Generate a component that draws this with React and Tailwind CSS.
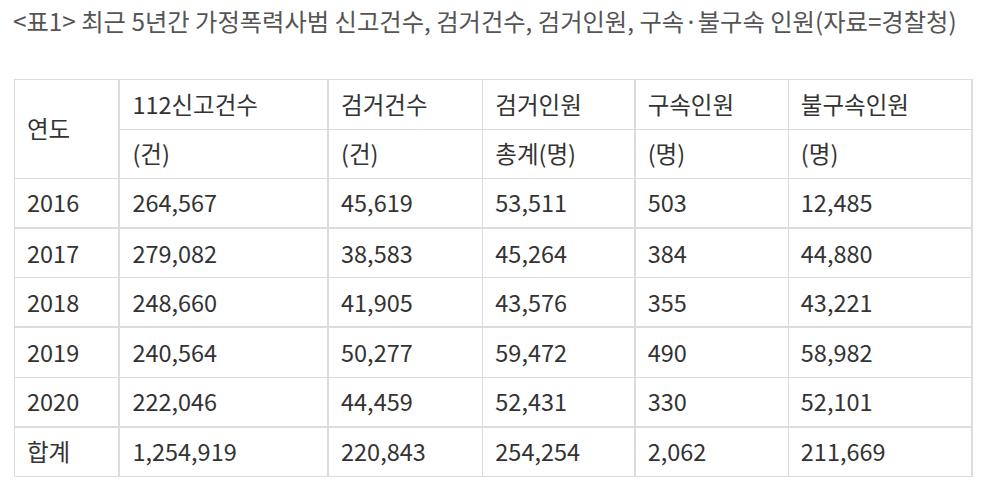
import React from "react";

const rows = [
  ["2016", "264,567", "45,619", "53,511", "503", "12,485"],
  ["2017", "279,082", "38,583", "45,264", "384", "44,880"],
  ["2018", "248,660", "41,905", "43,576", "355", "43,221"],
  ["2019", "240,564", "50,277", "59,472", "490", "58,982"],
  ["2020", "222,046", "44,459", "52,431", "330", "52,101"],
  ["합계", "1,254,919", "220,843", "254,254", "2,062", "211,669"],
];

// columns whose right edge is drawn a bit heavier
const colBorder = [
  "border-r-2",
  "border-r-2",
  "border-r",
  "border-r-2",
  "border-r",
  "border-r-2",
];

const cell = "border-[#dcdcdf] px-[12px] align-middle text-left font-normal";

const App = () => {
  return (
    <div
      className="w-[983px] h-[490px] bg-white text-[#333] overflow-hidden"
      style={{ fontFamily: '"Noto Sans CJK KR", "Noto Sans", sans-serif' }}
    >
      <div className="pl-[13px] pt-[6px] text-[24.3px] leading-[30px] text-[#555] whitespace-nowrap">
        &lt;표1&gt; 최근 5년간 가정폭력사범 신고건수, 검거건수, 검거인원, 구속·불구속 인원(자료=경찰청)
      </div>

      <table className="ml-[14px] mt-[43px] w-[959px] border-collapse text-[23.5px] leading-none border-l border-t border-[#dcdcdf]">
        <colgroup>
          <col className="w-[105px]" />
          <col className="w-[209px]" />
          <col className="w-[155px]" />
          <col className="w-[152px]" />
          <col className="w-[154px]" />
          <col className="w-[184px]" />
        </colgroup>
        <thead>
          <tr className="h-[49.6px]">
            <th rowSpan={2} className={`${cell} ${colBorder[0]} border-b`}>
              연도
            </th>
            <th className={`${cell} ${colBorder[1]} border-b`}>112신고건수</th>
            <th className={`${cell} ${colBorder[2]} border-b`}>검거건수</th>
            <th className={`${cell} ${colBorder[3]} border-b`}>검거인원</th>
            <th className={`${cell} ${colBorder[4]} border-b`}>구속인원</th>
            <th className={`${cell} ${colBorder[5]} border-b`}>불구속인원</th>
          </tr>
          <tr className="h-[49.6px]">
            <th className={`${cell} ${colBorder[1]} border-b`}>(건)</th>
            <th className={`${cell} ${colBorder[2]} border-b`}>(건)</th>
            <th className={`${cell} ${colBorder[3]} border-b`}>총계(명)</th>
            <th className={`${cell} ${colBorder[4]} border-b`}>(명)</th>
            <th className={`${cell} ${colBorder[5]} border-b`}>(명)</th>
          </tr>
        </thead>
        <tbody>
          {rows.map((r, i) => (
            <tr key={r[0]} className="h-[49.6px]">
              {r.map((v, j) => (
                <td
                  key={j}
                  className={`${cell} ${colBorder[j]} ${
                    i === 0 || i === 2 || i === 4 ? "border-b-2" : "border-b"
                  }`}
                >
                  {v}
                </td>
              ))}
            </tr>
          ))}
        </tbody>
      </table>
    </div>
  );
};

export default App;
